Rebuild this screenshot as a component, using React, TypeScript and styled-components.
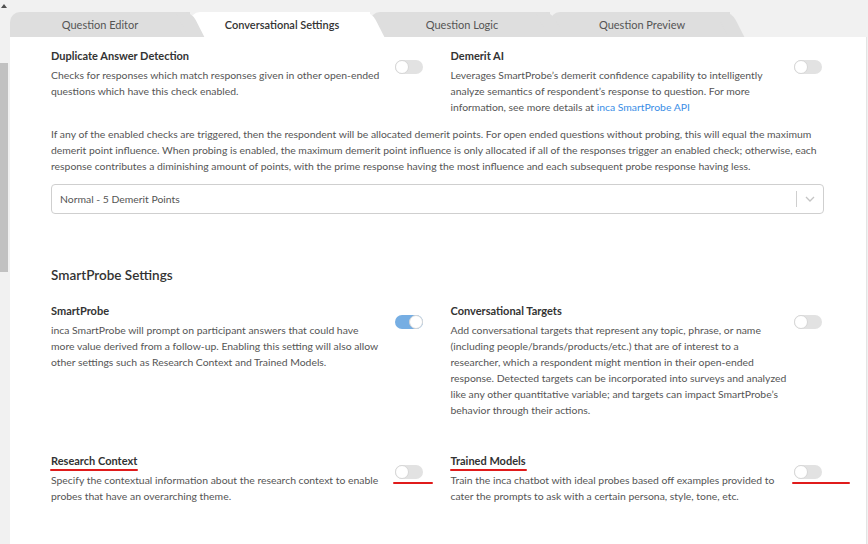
import * as React from 'react';
import styled, { createGlobalStyle } from 'styled-components';

const GlobalStyle = createGlobalStyle`
  *, *::before, *::after {
    box-sizing: border-box;
  }
  html, body {
    margin: 0;
    padding: 0;
    background: #f1f1f1;
  }
  body {
    font-family: Lato, 'Open Sans', sans-serif;
    color: #555;
  }
`;

const Page = styled.div`
  display: flex;
  width: 868px;
  height: 544px;
  overflow: hidden;
  background: #f1f1f1;
`;

const ScrollTrack = styled.div`
  width: 10px;
  flex: none;
  background: #f1f1f1;
`;

const ScrollArrow = styled.div`
  margin: 4px 0 0 1px;
  width: 0;
  height: 0;
  border-left: 3px solid transparent;
  border-right: 3px solid transparent;
  border-bottom: 4px solid #505050;
`;

const ScrollThumb = styled.div`
  margin-top: 55px;
  width: 8px;
  height: 209px;
  background: #c1c1c1;
`;

const Main = styled.div`
  flex: 1;
  display: flex;
  flex-direction: column;
  padding-right: 1px;
`;

const TabBar = styled.div`
  display: flex;
  height: 37px;
  padding-top: 12px;
`;

const Tab = styled.div<{ $active?: boolean; $z: number }>`
  position: relative;
  z-index: ${p => p.$z};
  width: 180px;
  display: flex;
  align-items: center;
  justify-content: center;
  font-size: 11px;
  color: ${p => (p.$active ? '#333' : '#555')};
  font-weight: ${p => (p.$active ? 600 : 400)};
  background: ${p => (p.$active ? '#fff' : '#dedede')};
  border-top-left-radius: 10px;

  &::after {
    content: '';
    position: absolute;
    top: 0;
    bottom: 0;
    right: -8px;
    width: 16px;
    background: inherit;
    transform: skewX(27deg);
    border-top-right-radius: 8px;
    z-index: -1;
  }

  & + & {
    padding-left: 4px;
  }

  span {
    position: relative;
    z-index: 1;
  }
`;

const Panel = styled.div`
  flex: 1;
  background: #fff;
  border-right: 1px solid #e4e4e4;
  padding: 11px 42px 0 41px;
  position: relative;
  z-index: 10;
`;

const Row = styled.div<{ $gap?: number }>`
  display: grid;
  grid-template-columns: 1fr 1fr;
  column-gap: 26px;
  margin-top: ${p => p.$gap ?? 0}px;
`;

const Setting = styled.div`
  display: flex;
  align-items: flex-start;
  justify-content: space-between;
`;

const SettingText = styled.div<{ $width: number }>`
  width: ${p => p.$width}px;
`;

const Title = styled.div<{ $marked?: boolean }>`
  position: relative;
  width: fit-content;
  font-size: 11px;
  font-weight: 700;
  color: #333;
  line-height: 16px;
  margin-bottom: 3px;

  ${p =>
    p.$marked &&
    `
    &::after {
      content: '';
      position: absolute;
      left: -1px;
      right: -1px;
      bottom: -2px;
      height: 2px;
      border-radius: 1px;
      background: #e01b1b;
    }
  `}
`;

const Desc = styled.div`
  font-size: 10.4px;
  line-height: 16px;
  color: #555;
`;

const Link = styled.a`
  color: #3a8ee6;
  text-decoration: none;
`;

const ToggleWrap = styled.div<{ $mark?: number }>`
  position: relative;
  margin-top: 12px;
  margin-right: 2px;
  flex: none;

  ${p =>
    p.$mark &&
    `
    &::after {
      content: '';
      position: absolute;
      left: -2px;
      top: 17px;
      width: ${p.$mark}px;
      height: 2px;
      border-radius: 1px;
      background: #e01b1b;
    }
  `}
`;

const Track = styled.div<{ $on?: boolean }>`
  position: relative;
  width: 28px;
  height: 14px;
  border-radius: 7px;
  background: ${p => (p.$on ? '#76aee3' : '#e2e2e2')};
`;

const Knob = styled.div<{ $on?: boolean }>`
  position: absolute;
  top: 0;
  left: ${p => (p.$on ? '14px' : '0')};
  width: 14px;
  height: 14px;
  border-radius: 50%;
  background: #fff;
  border: 1px solid #d6d6d6;
`;

const Paragraph = styled.p`
  margin: 11px 0 0;
  font-size: 10.4px;
  line-height: 16px;
  color: #555;
`;

const Select = styled.div`
  margin-top: 10px;
  height: 30px;
  border: 1px solid #cfcfcf;
  border-radius: 4px;
  display: flex;
  align-items: center;
  padding-left: 8px;
  font-size: 10.4px;
  color: #555;
`;

const SelectValue = styled.span`
  flex: 1;
`;

const Separator = styled.span`
  width: 1px;
  height: 16px;
  background: #cfcfcf;
`;

const Chevron = styled.span`
  display: flex;
  align-items: center;
  justify-content: center;
  width: 26px;
`;

const Heading = styled.h2`
  margin: 51px 0 0;
  font-size: 13.5px;
  font-weight: 600;
  color: #333;
  line-height: 20px;
`;

type ToggleProps = { on?: boolean; mark?: number };

const Toggle = ({ on, mark }: ToggleProps) => (
  <ToggleWrap $mark={mark}>
    <Track $on={on}>
      <Knob $on={on} />
    </Track>
  </ToggleWrap>
);

const tabs = ['Question Editor', 'Conversational Settings', 'Question Logic', 'Question Preview'];

const LEFT = 330;
const RIGHT = 336;

export default function App() {
  return (
    <>
      <GlobalStyle />
      <Page>
        <ScrollTrack>
          <ScrollArrow />
          <ScrollThumb />
        </ScrollTrack>
        <Main>
          <TabBar>
            {tabs.map((t, i) => (
              <Tab key={t} $active={i === 1} $z={tabs.length - i}>
                <span>{t}</span>
              </Tab>
            ))}
          </TabBar>
          <Panel>
            <Row>
              <Setting>
                <SettingText $width={LEFT}>
                  <Title>Duplicate Answer Detection</Title>
                  <Desc>
                    Checks for responses which match responses given in other open-ended questions which
                    have this check enabled.
                  </Desc>
                </SettingText>
                <Toggle />
              </Setting>
              <Setting>
                <SettingText $width={RIGHT}>
                  <Title>Demerit AI</Title>
                  <Desc>
                    Leverages SmartProbe’s demerit confidence capability to intelligently analyze semantics of
                    respondent’s response to question. For more information, see more details at{' '}
                    <Link href="#">inca SmartProbe API</Link>
                  </Desc>
                </SettingText>
                <Toggle />
              </Setting>
            </Row>

            <Paragraph>
              If any of the enabled checks are triggered, then the respondent will be allocated demerit points.
              For open ended questions without probing, this will equal the maximum demerit point influence. When
              probing is enabled, the maximum demerit point influence is only allocated if all of the responses
              trigger an enabled check; otherwise, each response contributes a diminishing amount of points, with
              the prime response having the most influence and each subsequent probe response having less.
            </Paragraph>

            <Select>
              <SelectValue>Normal - 5 Demerit Points</SelectValue>
              <Separator />
              <Chevron>
                <svg width="10" height="6" viewBox="0 0 10 6" fill="none">
                  <path d="M1 1l4 4 4-4" stroke="#c4c4c4" strokeWidth="1.3" />
                </svg>
              </Chevron>
            </Select>

            <Heading>SmartProbe Settings</Heading>

            <Row $gap={18}>
              <Setting>
                <SettingText $width={LEFT}>
                  <Title>SmartProbe</Title>
                  <Desc>
                    inca SmartProbe will prompt on participant answers that could have more value derived from a
                    follow-up. Enabling this setting will also allow other settings such as Research Context and
                    Trained Models.
                  </Desc>
                </SettingText>
                <Toggle on />
              </Setting>
              <Setting>
                <SettingText $width={RIGHT}>
                  <Title>Conversational Targets</Title>
                  <Desc>
                    Add conversational targets that represent any topic, phrase, or name (including
                    people/brands/products/etc.) that are of interest to a researcher, which a respondent might
                    mention in their open-ended response. Detected targets can be incorporated into surveys and
                    analyzed like any other quantitative variable; and targets can impact SmartProbe’s behavior
                    through their actions.
                  </Desc>
                </SettingText>
                <Toggle />
              </Setting>
            </Row>

            <Row $gap={35}>
              <Setting>
                <SettingText $width={LEFT}>
                  <Title $marked>Research Context</Title>
                  <Desc>
                    Specify the contextual information about the research context to enable probes that have an
                    overarching theme.
                  </Desc>
                </SettingText>
                <Toggle mark={40} />
              </Setting>
              <Setting>
                <SettingText $width={RIGHT}>
                  <Title $marked>Trained Models</Title>
                  <Desc>
                    Train the inca chatbot with ideal probes based off examples provided to cater the prompts to
                    ask with a certain persona, style, tone, etc.
                  </Desc>
                </SettingText>
                <Toggle mark={58} />
              </Setting>
            </Row>
          </Panel>
        </Main>
      </Page>
    </>
  );
}
